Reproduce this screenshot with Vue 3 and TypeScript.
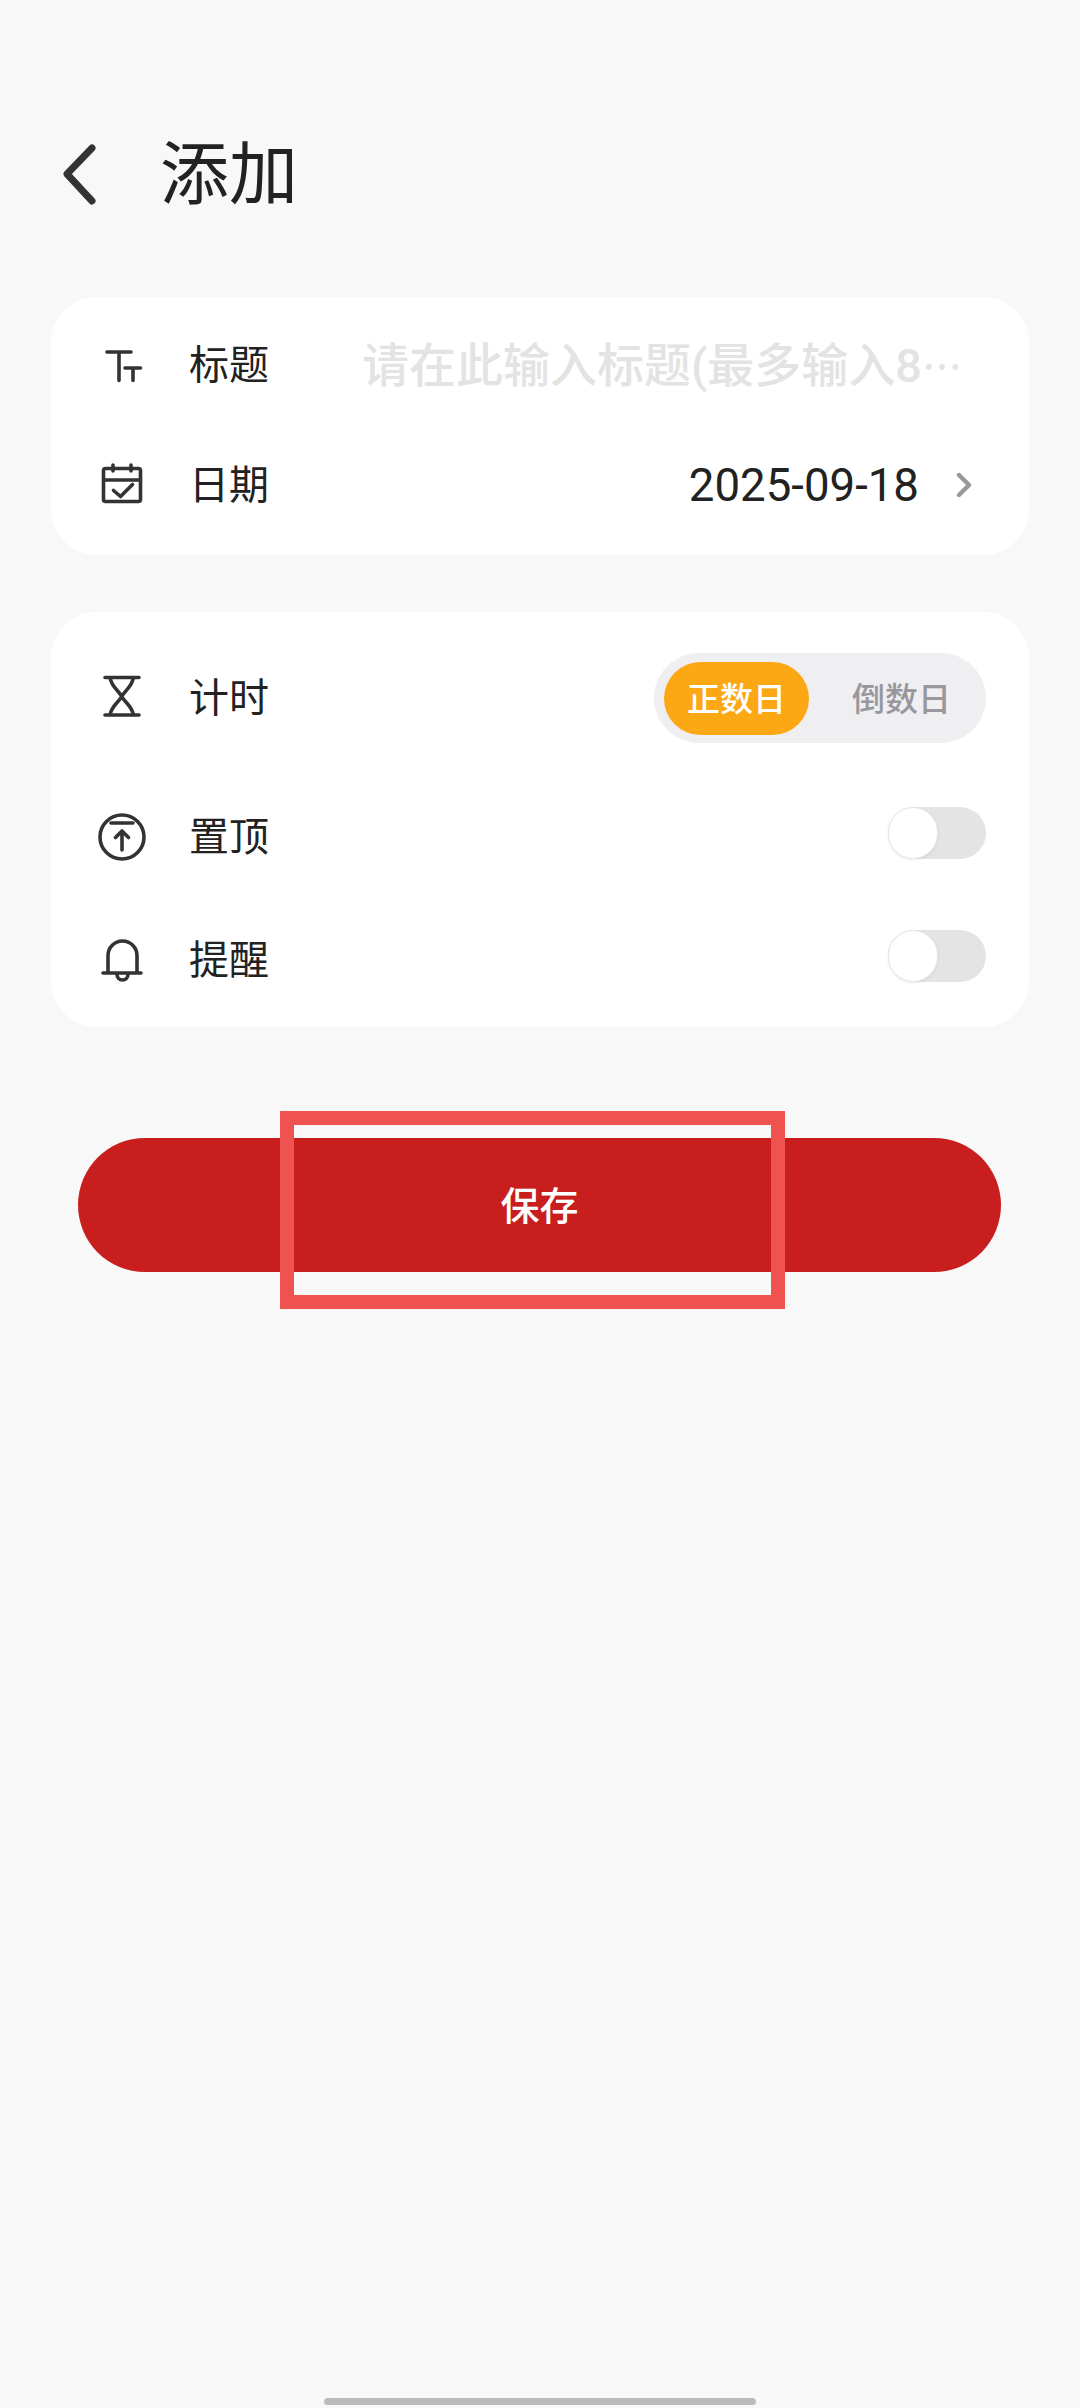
<script setup lang="ts">
const placeholder = '请在此输入标题(最多输入8'
const date = '2025-09-18'
</script>

<template>
  <div class="page">
    <header class="header">
      <svg class="back" viewBox="0 0 48 70" fill="none" stroke="#333" stroke-width="7" stroke-linecap="round" stroke-linejoin="round">
        <path d="M35 7 10 33l25 27" />
      </svg>
      <h1 class="title">添加</h1>
    </header>

    <section class="card card-one">
      <div class="row">
        <svg class="icon" viewBox="0 0 48 48" fill="none" stroke="#333" stroke-width="3.6" stroke-linecap="round">
          <path d="M9 11H33M21 11V39.5M27 27H42.5M35 27V39.5" />
        </svg>
        <span class="label">标题</span>
        <span class="placeholder">{{ placeholder }}<span class="dots">…</span></span>
      </div>
      <div class="row">
        <svg class="icon" viewBox="0 0 48 48" fill="none" stroke="#333" stroke-width="3.6" stroke-linecap="round" stroke-linejoin="round">
          <rect x="5.5" y="7.5" width="37" height="33" rx="2" />
          <path d="M15 4V10M33 4V10M6 19H42M15.5 29.5 22.5 35.5 34.5 23.5" />
        </svg>
        <span class="label">日期</span>
        <span class="date">{{ date }}</span>
        <svg class="more" viewBox="0 0 16 26" fill="none" stroke="#999" stroke-width="4.4" stroke-linecap="round" stroke-linejoin="round">
          <path d="M3 3 13 13 3 23" />
        </svg>
      </div>
    </section>

    <section class="card card-two">
      <div class="row row-timer">
        <svg class="icon" viewBox="0 0 48 48" fill="none" stroke="#333" stroke-width="3.6" stroke-linecap="round" stroke-linejoin="round">
          <path d="M7 3.5H41M7 41H41M12 3.5C13.5 13 21 17 23.7 22.5 26.5 28 34 32 35.5 41M35.5 3.5C34 13 26.5 17 23.7 22.5 21 28 13.5 32 12 41" />
        </svg>
        <span class="label">计时</span>
        <div class="segment">
          <span class="segment-item segment-active">正数日</span>
          <span class="segment-item segment-idle">倒数日</span>
        </div>
      </div>
      <div class="row row-pin">
        <svg class="icon" viewBox="0 0 48 48" fill="none" stroke="#333" stroke-width="3.6" stroke-linecap="round" stroke-linejoin="round">
          <circle cx="24" cy="24" r="22" />
          <path d="M13 10H35M24 18V37M17.5 24.5 24 18 30.5 24.5" />
        </svg>
        <span class="label">置顶</span>
        <span class="toggle"><span class="thumb"></span></span>
      </div>
      <div class="row row-remind">
        <svg class="icon" viewBox="0 0 48 48" fill="none" stroke="#333" stroke-width="3.6" stroke-linecap="round" stroke-linejoin="round">
          <path d="M10 37V19.5a14.5 14.5 0 0 1 29 0V37M5 37H43" />
          <path d="M19 38.5a5.5 5.5 0 0 0 11 0" />
        </svg>
        <span class="label">提醒</span>
        <span class="toggle"><span class="thumb"></span></span>
      </div>
    </section>

    <button class="save" type="button">
      <span class="save-text">保存</span>
      <span class="highlight"></span>
    </button>

    <div class="home-bar"></div>
  </div>
</template>

<style>
html,
body {
  margin: 0;
  background: #f8f8f8;
}
</style>

<style scoped>
.page {
  box-sizing: border-box;
  width: 1080px;
  height: 2408px;
  display: flex;
  flex-direction: column;
  background: #f8f8f8;
  overflow: hidden;
  color: #222;
  font-family: Roboto, "Noto Sans CJK SC", sans-serif;
}

.header {
  display: flex;
  align-items: center;
  height: 80px;
  margin-top: 136px;
  padding-left: 57px;
}

.back {
  width: 48px;
  height: 70px;
  flex: none;
}

.title {
  margin: 0 0 0 55px;
  font-size: 69px;
  font-weight: 400;
  line-height: 80px;
  color: #222;
}

.card {
  box-sizing: border-box;
  width: 978px;
  margin-left: 51px;
  background: #fff;
  border-radius: 46px;
}

.card-one {
  height: 258px;
  margin-top: 81px;
  padding-top: 8px;
}

.card-two {
  height: 415px;
  margin-top: 57px;
  padding-top: 26px;
}

.row {
  display: flex;
  align-items: center;
  height: 120px;
  padding: 0 43px 0 47px;
}

.row-pin {
  margin-top: 19px;
}

.row-remind {
  margin-top: 3px;
}

.icon {
  width: 48px;
  height: 48px;
  flex: none;
}

.label {
  margin-left: 43px;
  padding-top: 2px;
  font-size: 40px;
  line-height: 48px;
  color: #222;
}

.placeholder {
  margin-left: 93px;
  font-size: 47px;
  font-weight: 500;
  line-height: 60px;
  color: #e3e3e3;
  white-space: nowrap;
}

.dots {
  font-family: "Noto Sans CJK SC", sans-serif;
  font-size: 40px;
}

.date {
  margin-left: auto;
  padding-top: 1px;
  font-size: 45.6px;
  line-height: 60px;
  color: #222;
}

.more {
  width: 16px;
  height: 26px;
  margin: 0 14px 0 37px;
  flex: none;
}

.segment {
  box-sizing: border-box;
  display: flex;
  align-items: center;
  width: 332px;
  height: 90px;
  margin-left: auto;
  padding: 0 10px;
  background: #efeef0;
  border-radius: 45px;
}

.segment-item {
  display: flex;
  align-items: center;
  justify-content: center;
  flex: none;
  height: 73px;
  padding-bottom: 3px;
  box-sizing: border-box;
  border-radius: 37px;
  font-size: 33px;
  font-weight: 500;
}

.segment-active {
  width: 145px;
  background: #fca714;
  color: #fff;
}

.segment-idle {
  width: 149px;
  margin-left: 18px;
  color: #98989c;
}

.toggle {
  box-sizing: border-box;
  display: block;
  width: 98px;
  height: 52px;
  margin: 0 0 8px auto;
  background: #e4e4e4;
  border-radius: 26px;
}

.thumb {
  box-sizing: border-box;
  display: block;
  width: 50px;
  height: 52px;
  background: #fff;
  border: 1px solid #e6e6e6;
  border-radius: 26px;
  box-shadow: 0 1px 3px rgba(0, 0, 0, 0.08);
}

.save {
  position: relative;
  display: block;
  width: 923px;
  height: 134px;
  margin: 111px 0 0 78px;
  padding: 0 0 4px;
  background: #c81e1e;
  border: 0;
  border-radius: 67px;
  font-family: inherit;
  font-size: 39px;
  font-weight: 500;
  color: #fff;
}

.highlight {
  position: absolute;
  top: -27px;
  left: 202px;
  box-sizing: border-box;
  width: 505px;
  height: 198px;
  border: 14px solid #ef5350;
}

.home-bar {
  width: 432px;
  height: 7px;
  margin: auto 0 3px 324px;
  background: #bbb;
  border-radius: 4px;
}
</style>
